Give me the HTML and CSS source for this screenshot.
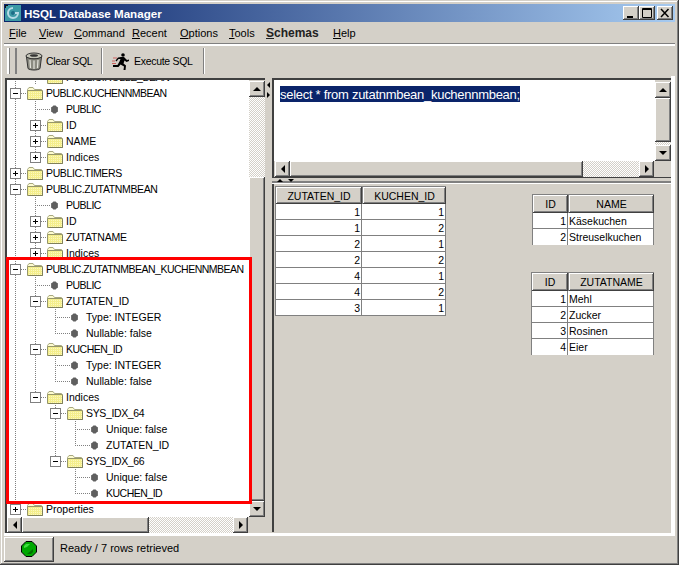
FILE: index.html
```html
<!DOCTYPE html>
<html lang="en">
<head>
<meta charset="utf-8">
<title>HSQL Database Manager</title>
<link rel="stylesheet" href="styles.css">
</head>
<body>
<svg class="defs" width="0" height="0">
  <defs>
    <pattern id="dots" width="2" height="2" patternUnits="userSpaceOnUse">
      <rect width="2" height="2" fill="#f4ee8c"/>
      <rect width="1" height="1" fill="#fbf8c0"/>
    </pattern>
    <symbol id="folder" viewBox="0 0 16 14">
      <path d="M.5 3.5 2 1.5H6L7.5 3.5H14.5V4.500H.5Z" fill="#fdfbd0" stroke="#a8a880"/>
      <path d="M.5 4.500H15.500V13.500H.5Z" fill="url(#dots)" stroke="#96966a"/>
      <path d="M1.500 13.500H15.500V5.500" fill="none" stroke="#80805a"/>
    </symbol>
    <symbol id="bullet" viewBox="0 0 8 8">
      <path d="M3 .5H5L6 1.500 7 2V6L6 6.500 5 7.500H3L2 6.500 1 6V2L2 1.500Z" fill="#5f5f5f"/>
    </symbol>
  </defs>
</svg>
<div class="window">
  <header class="titlebar">
    <svg class="appicon" width="16" height="16" viewBox="0 0 16 16"><rect width="16" height="16" fill="#3d9aa6"/><path d="M0 0H3V1H1V3H0Z" fill="#111"/><path d="M8 3a5 5 0 1 0 5 5H9V9.500" fill="none" stroke="#b7dbe6" stroke-width="2"/><circle cx="8" cy="8" r="2" fill="#1d6d88"/></svg>
    <span class="title">HSQL Database Manager</span>
    <div class="wincontrols">
      <span class="winbtn"><svg width="16" height="14" viewBox="0 0 16 14"><rect x="4" y="10" width="6" height="2" fill="#000"/></svg></span>
      <span class="winbtn"><svg width="16" height="14" viewBox="0 0 16 14"><path d="M3.500 2.500H12.500V11.500H3.500ZM3 3.500H13" fill="none" stroke="#000"/></svg></span>
      <span class="winbtn close"><svg width="16" height="14" viewBox="0 0 16 14"><path d="M4 3 11.500 11M11.500 3 4 11" fill="none" stroke="#000" stroke-width="1.500"/></svg></span>
    </div>
  </header>
  <nav class="menubar">
    <span class="m-file"><u>F</u>ile</span>
    <span class="m-view"><u>V</u>iew</span>
    <span class="m-command"><u>C</u>ommand</span>
    <span class="m-recent"><u>R</u>ecent</span>
    <span class="m-options"><u>O</u>ptions</span>
    <span class="m-tools"><u>T</u>ools</span>
    <span class="m-schemas"><u>S</u>chemas</span>
    <span><u>H</u>elp</span>
  </nav>
  <div class="toolbar">
    <span class="grip"></span>
    <div class="tool clear">
      <svg width="18" height="19" viewBox="0 0 18 19"><ellipse cx="9" cy="4" rx="8" ry="3" fill="#c4c4b8" stroke="#333"/><path d="M1.500 5 3 16.500C5 18.500 13 18.500 15 16.500L16.500 5C13 7.500 5 7.500 1.500 5Z" fill="#8a8a80" stroke="#333"/><path d="M5 8 5.500 16M9 8.500V17M13 8 12.500 16" stroke="#e4e4dc" stroke-width="1.200"/><ellipse cx="9" cy="3.500" rx="4" ry="1.300" fill="#333"/></svg>
      <span>Clear SQL</span>
    </div>
    <div class="tool exec">
      <svg width="17" height="17" viewBox="0 0 17 17"><circle cx="11" cy="2" r="1.800" fill="#000"/><path d="M9 4H12L15 7 17 6.500V8L14.500 9 12.500 7.500 11.500 10.500 14 12.500 13.500 17H11.500L12 13.500 8.500 11.500 6.500 14H1V12H5.500L7.500 8.500 8.500 6 6.500 6 4.500 8.500 3.500 7.500 6 4.500Z" fill="#000"/><path d="M1 5H5M0 8H3M0 10.500H4" stroke="#c33" stroke-width=".7"/></svg>
      <span>Execute SQL</span>
    </div>
  </div>
  <main class="main">
    <section class="treepanel">
      <div class="treewrap">
        <div class="treeview">
          <ul class="tree">
            <li class="row"><i class="c v"></i><i class="c v"></i><i class="ic"><svg width="16" height="14"><use href="#folder"/></svg></i><span class="t2">PUBLIC.ROLLE_BEAN</span></li>
            <li class="row"><i class="c exp minus v"></i><i class="ic fold"><svg width="16" height="14"><use href="#folder"/></svg></i><span class="t1">PUBLIC.KUCHENNMBEAN</span></li>
            <li class="row"><i class="c v"></i><i class="c tee"></i><i class="ic leaf"><svg width="8" height="8"><use href="#bullet"/></svg></i><span class="t1">PUBLIC</span></li>
            <li class="row"><i class="c v"></i><i class="c exp plus v"></i><i class="ic fold"><svg width="16" height="14"><use href="#folder"/></svg></i><span>ID</span></li>
            <li class="row"><i class="c v"></i><i class="c exp plus v"></i><i class="ic fold"><svg width="16" height="14"><use href="#folder"/></svg></i><span>NAME</span></li>
            <li class="row"><i class="c v"></i><i class="c exp plus up"></i><i class="ic fold"><svg width="16" height="14"><use href="#folder"/></svg></i><span>Indices</span></li>
            <li class="row"><i class="c exp plus v"></i><i class="ic fold"><svg width="16" height="14"><use href="#folder"/></svg></i><span class="t2">PUBLIC.TIMERS</span></li>
            <li class="row"><i class="c exp minus v"></i><i class="ic fold"><svg width="16" height="14"><use href="#folder"/></svg></i><span class="t2">PUBLIC.ZUTATNMBEAN</span></li>
            <li class="row"><i class="c v"></i><i class="c tee"></i><i class="ic leaf"><svg width="8" height="8"><use href="#bullet"/></svg></i><span class="t1">PUBLIC</span></li>
            <li class="row"><i class="c v"></i><i class="c exp plus v"></i><i class="ic fold"><svg width="16" height="14"><use href="#folder"/></svg></i><span>ID</span></li>
            <li class="row"><i class="c v"></i><i class="c exp plus v"></i><i class="ic fold"><svg width="16" height="14"><use href="#folder"/></svg></i><span class="t3">ZUTATNAME</span></li>
            <li class="row"><i class="c v"></i><i class="c exp plus up"></i><i class="ic fold"><svg width="16" height="14"><use href="#folder"/></svg></i><span>Indices</span></li>
            <li class="row"><i class="c exp minus v"></i><i class="ic fold"><svg width="16" height="14"><use href="#folder"/></svg></i><span class="t1">PUBLIC.ZUTATNMBEAN_KUCHENNMBEAN</span></li>
            <li class="row"><i class="c v"></i><i class="c tee"></i><i class="ic leaf"><svg width="8" height="8"><use href="#bullet"/></svg></i><span class="t1">PUBLIC</span></li>
            <li class="row"><i class="c v"></i><i class="c exp minus v"></i><i class="ic fold"><svg width="16" height="14"><use href="#folder"/></svg></i><span>ZUTATEN_ID</span></li>
            <li class="row"><i class="c v"></i><i class="c v"></i><i class="c tee"></i><i class="ic leaf"><svg width="8" height="8"><use href="#bullet"/></svg></i><span>Type: INTEGER</span></li>
            <li class="row"><i class="c v"></i><i class="c v"></i><i class="c ell"></i><i class="ic leaf"><svg width="8" height="8"><use href="#bullet"/></svg></i><span>Nullable: false</span></li>
            <li class="row"><i class="c v"></i><i class="c exp minus v"></i><i class="ic fold"><svg width="16" height="14"><use href="#folder"/></svg></i><span class="t1">KUCHEN_ID</span></li>
            <li class="row"><i class="c v"></i><i class="c v"></i><i class="c tee"></i><i class="ic leaf"><svg width="8" height="8"><use href="#bullet"/></svg></i><span>Type: INTEGER</span></li>
            <li class="row"><i class="c v"></i><i class="c v"></i><i class="c ell"></i><i class="ic leaf"><svg width="8" height="8"><use href="#bullet"/></svg></i><span>Nullable: false</span></li>
            <li class="row"><i class="c v"></i><i class="c exp minus up"></i><i class="ic fold"><svg width="16" height="14"><use href="#folder"/></svg></i><span>Indices</span></li>
            <li class="row"><i class="c v"></i><i class="c"></i><i class="c exp minus v"></i><i class="ic fold"><svg width="16" height="14"><use href="#folder"/></svg></i><span class="t2">SYS_IDX_64</span></li>
            <li class="row"><i class="c v"></i><i class="c"></i><i class="c v"></i><i class="c tee"></i><i class="ic leaf"><svg width="8" height="8"><use href="#bullet"/></svg></i><span>Unique: false</span></li>
            <li class="row"><i class="c v"></i><i class="c"></i><i class="c v"></i><i class="c ell"></i><i class="ic leaf"><svg width="8" height="8"><use href="#bullet"/></svg></i><span>ZUTATEN_ID</span></li>
            <li class="row"><i class="c v"></i><i class="c"></i><i class="c exp minus up"></i><i class="ic fold"><svg width="16" height="14"><use href="#folder"/></svg></i><span class="t2">SYS_IDX_66</span></li>
            <li class="row"><i class="c v"></i><i class="c"></i><i class="c"></i><i class="c tee"></i><i class="ic leaf"><svg width="8" height="8"><use href="#bullet"/></svg></i><span>Unique: false</span></li>
            <li class="row"><i class="c v"></i><i class="c"></i><i class="c"></i><i class="c ell"></i><i class="ic leaf"><svg width="8" height="8"><use href="#bullet"/></svg></i><span class="t1">KUCHEN_ID</span></li>
            <li class="row"><i class="c exp plus up"></i><i class="ic fold"><svg width="16" height="14"><use href="#folder"/></svg></i><span>Properties</span></li>
          </ul>
        </div>
        <div class="vscroll tree-v">
          <span class="sbtn"><b class="arr a-up"></b></span>
          <span class="dither d-tree"></span>
          <span class="thumb"></span>
          <span class="sbtn"><b class="arr a-down"></b></span>
        </div>
      </div>
      <div class="hscroll tree-h">
        <span class="sbtn"><b class="arr a-left"></b></span>
        <span class="thumb t-tree"></span>
        <span class="dither"></span>
        <span class="sbtn"><b class="arr a-right"></b></span>
        <span class="corner"></span>
      </div>
    </section>
    <div class="vsplit"><b class="arr a-left small"></b><b class="arr a-right small"></b></div>
    <section class="rightpane">
      <div class="sqlpanel">
        <div class="sqlrow">
          <div class="sqltext"><span class="selected">select * from zutatnmbean_kuchennmbean;</span></div>
          <div class="vscroll sql-v">
            <span class="sbtn"><b class="arr a-up"></b></span>
            <span class="thumb"></span>
            <span class="dither d-sql"></span>
            <span class="sbtn"><b class="arr a-down"></b></span>
          </div>
        </div>
        <div class="hscroll sql-h">
          <span class="sbtn"><b class="arr a-left"></b></span>
          <span class="thumb t-sql"></span>
          <span class="dither"></span>
          <span class="sbtn"><b class="arr a-right"></b></span>
          <span class="corner"></span>
        </div>
      </div>
      <div class="hsplit"><b class="arr a-up small"></b><b class="arr a-down small"></b></div>
      <div class="results">
        <table class="grid g-main">
          <thead><tr><th>ZUTATEN_ID</th><th>KUCHEN_ID</th></tr></thead>
          <tbody>
            <tr><td>1</td><td>1</td></tr>
            <tr><td>1</td><td>2</td></tr>
            <tr><td>2</td><td>1</td></tr>
            <tr><td>2</td><td>2</td></tr>
            <tr><td>4</td><td>1</td></tr>
            <tr><td>4</td><td>2</td></tr>
            <tr><td>3</td><td>1</td></tr>
          </tbody>
        </table>
        <div class="sidetables">
          <table class="grid g-kuchen">
            <thead><tr><th>ID</th><th>NAME</th></tr></thead>
            <tbody>
              <tr><td>1</td><td class="txt">Käsekuchen</td></tr>
              <tr><td>2</td><td class="txt">Streuselkuchen</td></tr>
            </tbody>
          </table>
          <table class="grid g-zutat">
            <thead><tr><th>ID</th><th>ZUTATNAME</th></tr></thead>
            <tbody>
              <tr><td>1</td><td class="txt">Mehl</td></tr>
              <tr><td>2</td><td class="txt">Zucker</td></tr>
              <tr><td>3</td><td class="txt">Rosinen</td></tr>
              <tr><td>4</td><td class="txt">Eier</td></tr>
            </tbody>
          </table>
        </div>
      </div>
    </section>
  </main>
  <footer class="statusbar">
    <span class="gembtn"><svg width="16" height="16" viewBox="0 0 16 16"><path d="M5 .5H11L15.500 5V11L11 15.500H5L.5 11V5Z" fill="#00a800" stroke="#000"/><path d="M5 3H9L6 6 3 7V5Z" fill="#40e040"/><path d="M12 8V11L10 13H6Z" fill="#007000"/></svg></span>
    <span class="statustext">Ready / 7 rows retrieved</span>
  </footer>
  <div class="highlight"></div>
</div>
</body>
</html>
```
FILE: styles.css
```css
* { box-sizing: border-box; }
html, body { margin: 0; padding: 0; }
body { width: 679px; height: 565px; overflow: hidden; font: 10.5px "Liberation Sans", Arial, sans-serif; color: #000; }
.defs { position: absolute; }
.window {
  position: relative;
  width: 679px; height: 565px; padding: 4px;
  background: #d4d0c8;
  box-shadow: inset -1px -1px #404040, inset 1px 1px #d4d0c8, inset -2px -2px #808080, inset 2px 2px #fff;
  display: flex; flex-direction: column;
}
.titlebar {
  height: 18px; flex: none; display: flex; align-items: center;
  background: linear-gradient(to right, #0a246a, #a6caf0);
  color: #fff; padding-left: 1px;
}
.appicon { flex: none; }
.title { margin-left: 3px; font-weight: bold; font-size: 11.600px; }
.wincontrols { margin-left: auto; display: flex; margin-right: 2px; }
.winbtn {
  width: 16px; height: 14px; background: #d4d0c8; display: block;
  box-shadow: inset -1px -1px #404040, inset 1px 1px #fff, inset -2px -2px #808080;
}
.winbtn svg { display: block; }
.winbtn.close { margin-left: 2px; }
.menubar {
  height: 24px; flex: none; display: flex; align-items: center; padding: 0 0 0 5px;
  border-bottom: 2px solid #fff; box-shadow: inset 0 -1px #808080;
  font-size: 11px;
}
.m-file { width: 30px; }
.m-view { width: 35px; }
.m-command { width: 58px; }
.m-recent { width: 48px; }
.m-options { width: 49px; }
.m-tools { width: 37px; }
.m-schemas { width: 67px; font-weight: bold; font-size: 12px; color: #222; }
.toolbar { height: 30px; flex: none; display: flex; align-items: stretch; padding: 2px 0 2px 3px; font-size: 10.500px; letter-spacing: -.3px; }
.grip { width: 10px; border-left: 2px solid #fff; border-right: 2px solid #808080; box-shadow: inset 1px 0 #808080; }
.tool { display: flex; align-items: center; border-right: 1px solid #808080; box-shadow: 1px 0 #fff; }
.tool.clear { width: 85px; padding-left: 8px; gap: 3px; }
.tool.exec { width: 102px; padding-left: 10px; gap: 5px; }
.main {
  height: 460px; flex: none; display: flex; align-items: flex-start;
  padding: 2px 0 0 1px;
  border-right: 4px solid #fff; border-bottom: 3px solid #fff;
}
.treepanel { width: 260px; height: 455px; flex: none; border-top: 2px solid #404040; border-left: 2px solid #404040; display: flex; flex-direction: column; }
.treewrap { flex: 1; min-height: 0; display: flex; }
.treeview { flex: 1; min-width: 0; background: #fff; overflow: hidden; }
.tree { list-style: none; margin: -11px 0 0 -2px; padding: 0; }
.row { height: 16px; display: flex; align-items: center; white-space: nowrap; }
.row span { margin-left: 1px; }
.row .t1 { letter-spacing: -.5px; }
.row .t2 { letter-spacing: -.36px; }
.row .t3 { letter-spacing: -.2px; }
.c, .ic { flex: none; width: 20px; height: 16px; display: flex; align-items: center; justify-content: center; font-style: normal; }
.v { background: repeating-linear-gradient(to bottom, #808080 0 1px, transparent 1px 2px) 10px 0 / 1px 100% no-repeat; }
.tee {
  background:
    repeating-linear-gradient(to right, #808080 0 1px, transparent 1px 2px) 10px 8px / 10px 1px no-repeat,
    repeating-linear-gradient(to bottom, #808080 0 1px, transparent 1px 2px) 10px 0 / 1px 100% no-repeat;
}
.ell {
  background:
    repeating-linear-gradient(to right, #808080 0 1px, transparent 1px 2px) 10px 8px / 10px 1px no-repeat,
    repeating-linear-gradient(to bottom, #808080 0 1px, transparent 1px 2px) 10px 0 / 1px 9px no-repeat;
}
.up { background: repeating-linear-gradient(to bottom, #808080 0 1px, transparent 1px 2px) 10px 0 / 1px 4px no-repeat; }
.exp { position: relative; }
.exp::before {
  content: ""; width: 9px; height: 9px; margin-left: 1px; margin-top: 1px;
  border: 1px solid #808080;
  background:
    linear-gradient(#000, #000) center / 5px 1px no-repeat,
    #fff;
}
.exp.plus::before {
  background:
    linear-gradient(#000, #000) center / 5px 1px no-repeat,
    linear-gradient(#000, #000) center / 1px 5px no-repeat,
    #fff;
}
.exp::after {
  content: ""; position: absolute; left: 16px; top: 8px; width: 4px; height: 1px;
  background: repeating-linear-gradient(to right, #808080 0 1px, transparent 1px 2px);
}
.fold { justify-content: center; background: repeating-linear-gradient(to right, #808080 0 1px, transparent 1px 2px) 0 8px / 2px 1px no-repeat; }
.fold svg { display: block; }
.leaf { justify-content: flex-start; padding-left: 5px; background: repeating-linear-gradient(to right, #808080 0 1px, transparent 1px 2px) 0 8px / 5px 1px no-repeat; }
.leaf svg { display: block; width: 9px; height: 9px; }

.vscroll { width: 16px; flex: none; display: flex; flex-direction: column; background: #d4d0c8; }
.hscroll { height: 16px; flex: none; display: flex; background: #d4d0c8; }
.sbtn, .thumb {
  display: flex; align-items: center; justify-content: center; background: #d4d0c8; flex: none;
  box-shadow: inset -1px -1px #404040, inset 1px 1px #fff, inset -2px -2px #808080;
}
.vscroll .sbtn { height: 16px; width: 16px; }
.hscroll .sbtn { width: 15px; height: 16px; }
.dither { background: repeating-conic-gradient(#d4d0c8 0 25%, #fff 0 50%) 0 0 / 2px 2px; flex: 1; }
.vscroll .thumb { flex: 1; }
.vscroll .dither { flex: none; }
.tree-v { padding-top: 1px; }
.d-tree { height: 80px; }
.d-sql { height: 3px; }
.t-tree { width: 127px; }
.t-sql { width: 293px; }
.corner { width: 17px; flex: none; background: #d4d0c8; }
.arr { width: 0; height: 0; display: block; border-style: solid; border-color: transparent; }
.a-up { border-width: 0 4px 4px; border-bottom-color: #000; }
.a-down { border-width: 4px 4px 0; border-top-color: #000; }
.a-left { border-width: 4px 4px 4px 0; border-right-color: #000; }
.a-right { border-width: 4px 0 4px 4px; border-left-color: #000; }
.a-up.small { border-width: 0 3px 3px; }
.a-down.small { border-width: 3px 3px 0; }
.a-left.small { border-width: 3px 3px 3px 0; }
.a-right.small { border-width: 3px 0 3px 3px; }

.vsplit { width: 7px; flex: none; display: flex; flex-direction: column; gap: 4px; padding: 4px 0 0 2px; }
.rightpane { width: 399px; height: 454px; flex: none; display: flex; flex-direction: column; }
.sqlpanel { height: 100px; flex: none; border-top: 2px solid #404040; border-left: 2px solid #404040; border-bottom: 1px solid #404040; display: flex; flex-direction: column; }
.sqlrow { flex: 1; min-height: 0; display: flex; }
.sqltext { flex: 1; background: #fff; padding: 6px 0 0 6px; font-size: 13px; letter-spacing: -.28px; }
.selected { background: #0a246a; color: #fff; display: inline-block; height: 16px; line-height: 17px; }
.sql-v { padding-top: 2px; }
.sql-h { padding-left: 1px; }
.hsplit { height: 6px; flex: none; display: flex; align-items: center; gap: 5px; padding: 0 0 1px 5px; border-bottom: 1px solid #fff; box-shadow: inset 0 -2px #808080; }
.results { flex: 1; min-height: 0; border-left: 2px solid #404040; padding: 2px 0 0 1px; display: flex; align-items: flex-start; }
.grid { border-collapse: separate; border-spacing: 0; table-layout: fixed; flex: none; }
.grid th {
  height: 18px; padding: 0; font-weight: normal; text-align: center; background: #d4d0c8;
  box-shadow: inset -1px -1px #404040, inset 1px 1px #fff, inset -2px -2px #808080;
  border-left: 1px solid #808080; border-top: 1px solid #808080;
}
.grid td {
  height: 16px; padding: 0 1px 0 1px; background: #fff; text-align: right;
  border-right: 1px solid #808080; border-bottom: 1px solid #808080;
}
.grid td:first-child { border-left: 1px solid #808080; }
.grid td.txt { text-align: left; }
.g-main { width: 171px; }
.g-main th:first-child { width: 87px; }
.sidetables { margin-left: 86px; padding-top: 8px; display: flex; flex-direction: column; align-items: flex-start; }
.sidetables .grid th { height: 19px; }
.g-kuchen { width: 122px; }
.g-kuchen th:first-child { width: 36px; }
.g-kuchen tr:last-child td { border-bottom: none; }
.g-zutat { width: 123px; margin: 27px 0 0 -1px; }
.g-zutat th:first-child { width: 37px; }
.g-zutat tr:last-child td { border-bottom: none; }
.statusbar { height: 26px; flex: none; display: flex; align-items: center; }
.gembtn { width: 50px; height: 25px; display: flex; align-items: center; justify-content: center; box-shadow: inset -1px -1px #404040, inset 1px 1px #fff, inset -2px -2px #808080; }
.statustext { margin: 0 0 2px 6px; font-size: 11px; }
.highlight { position: absolute; left: 6px; top: 257px; width: 246px; height: 247px; border: 3px solid #f00; }
```
